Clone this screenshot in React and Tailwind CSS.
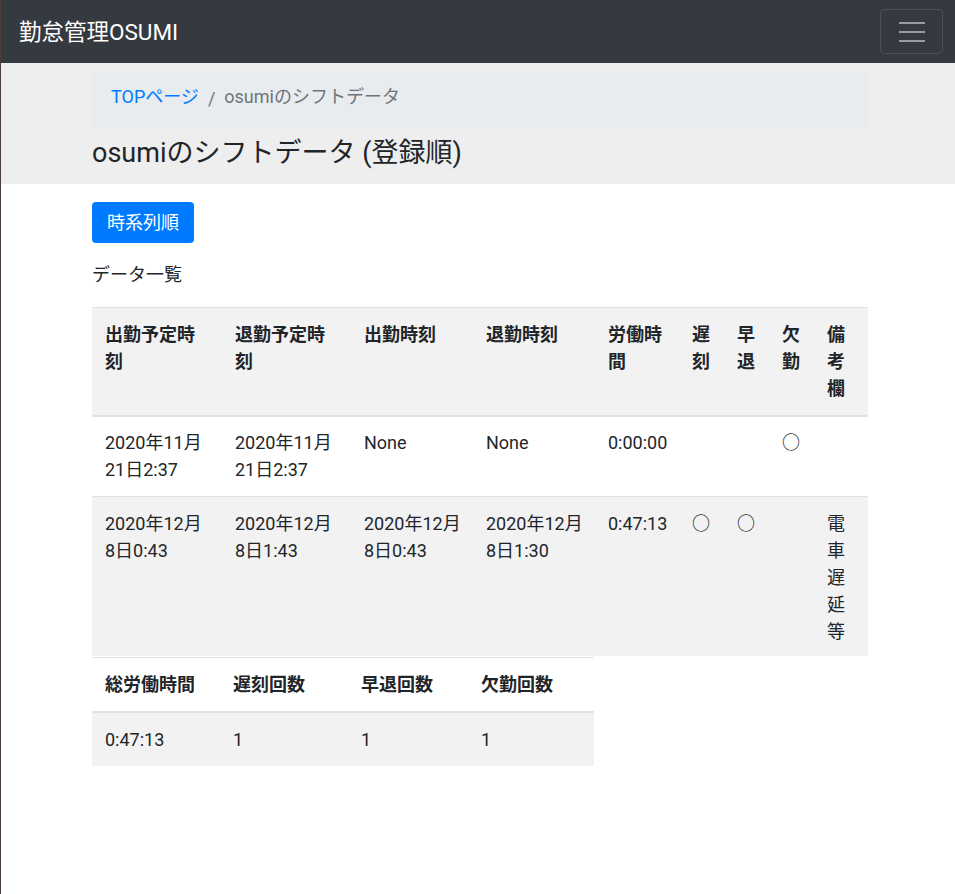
import React from "react";

const F = { fontFamily: 'Roboto, "Noto Sans CJK JP", sans-serif' };

function Lines({ items }) {
  return items.map((t, i) => (
    <span key={i} className="block whitespace-nowrap">{t}</span>
  ));
}

export default function App() {
  const th = "align-top text-left font-bold px-[13px] py-[13px] border-t border-b-2 border-[#dee2e6]";
  const td1 = "align-top px-[13px] pt-[12px] pb-[13px] border-t border-[#dee2e6]";
  const td2 = "align-top px-[13px] pt-[13px] pb-[11px] border-t border-[#dee2e6]";
  const td = "align-top px-[13px] py-[13px] border-t border-[#dee2e6]";
  return (
    <div className="min-h-[894px] bg-white border-l border-[#4d403b] text-[#212529] text-[18px] leading-[27px]" style={F}>
      <nav className="h-[63px] bg-[#343a40] flex items-center justify-between pl-[18px] pr-[12px]">
        <span className="text-white text-[22.5px] leading-[32px]">勤怠管理OSUMI</span>
        <button className="w-[63px] h-[45px] rounded-[5px] border border-[rgba(255,255,255,0.12)] flex flex-col items-center justify-center gap-[7px]">
          <span className="block w-[26px] h-[2px] bg-[rgba(255,255,255,0.5)]"></span>
          <span className="block w-[26px] h-[2px] bg-[rgba(255,255,255,0.5)]"></span>
          <span className="block w-[26px] h-[2px] bg-[rgba(255,255,255,0.5)]"></span>
        </button>
      </nav>

      <div className="bg-[#eeeeee] pt-[9px] pb-[15px]">
        <div className="ml-[91px] w-[776px]">
          <div className="h-[56px] bg-[#e9ecef] rounded-[4px] flex items-start pt-[11px] px-[19px]">
            <span className="text-[#007bff]">TOPページ</span>
            <span className="text-[#6c757d] px-[9px] pt-[2px]">/</span>
            <span className="text-[#6c757d]">osumiのシフトデータ</span>
          </div>
          <h4 className="mt-[9px] text-[27px] leading-[32px] font-normal">osumiのシフトデータ (登録順)</h4>
        </div>
      </div>

      <div className="ml-[91px] w-[776px]">
        <button className="mt-[18px] h-[41px] px-[15px] bg-[#007bff] text-white rounded-[4px] text-[18px] leading-[27px]">時系列順</button>
        <p className="mt-[18px] mb-[19px]">データ一覧</p>

        <table className="table-fixed border-collapse w-[776px]">
          <colgroup>
            <col className="w-[130px]" />
            <col className="w-[129px]" />
            <col className="w-[122px]" />
            <col className="w-[122px]" />
            <col className="w-[84px]" />
            <col className="w-[45px]" />
            <col className="w-[45px]" />
            <col className="w-[45px]" />
            <col className="w-[54px]" />
          </colgroup>
          <thead>
            <tr className="bg-[#f2f2f2]">
              <th className={th}>出勤予定時刻</th>
              <th className={th}>退勤予定時刻</th>
              <th className={th}>出勤時刻</th>
              <th className={th}>退勤時刻</th>
              <th className={th}>労働時間</th>
              <th className={th}>遅刻</th>
              <th className={th}>早退</th>
              <th className={th}>欠勤</th>
              <th className={th}>備考欄</th>
            </tr>
          </thead>
          <tbody>
            <tr className="bg-white">
              <td className={td1}><Lines items={["2020年11月", "21日2:37"]} /></td>
              <td className={td1}><Lines items={["2020年11月", "21日2:37"]} /></td>
              <td className={td1}>None</td>
              <td className={td1}>None</td>
              <td className={td1 + " whitespace-nowrap"}>0:00:00</td>
              <td className={td1}></td>
              <td className={td1}></td>
              <td className={td1}>○</td>
              <td className={td1}></td>
            </tr>
            <tr className="bg-[#f2f2f2]">
              <td className={td2}><Lines items={["2020年12月", "8日0:43"]} /></td>
              <td className={td2}><Lines items={["2020年12月", "8日1:43"]} /></td>
              <td className={td2}><Lines items={["2020年12月", "8日0:43"]} /></td>
              <td className={td2}><Lines items={["2020年12月", "8日1:30"]} /></td>
              <td className={td2 + " whitespace-nowrap"}>0:47:13</td>
              <td className={td2}>○</td>
              <td className={td2}>○</td>
              <td className={td2}></td>
              <td className={td2}>電車遅延等</td>
            </tr>
          </tbody>
        </table>

        <table className="table-fixed border-collapse w-[502px] mt-[1px]">
          <colgroup>
            <col className="w-[128px]" />
            <col className="w-[128px]" />
            <col className="w-[120px]" />
            <col className="w-[126px]" />
          </colgroup>
          <thead>
            <tr className="bg-white">
              <th className={th}>総労働時間</th>
              <th className={th}>遅刻回数</th>
              <th className={th}>早退回数</th>
              <th className={th}>欠勤回数</th>
            </tr>
          </thead>
          <tbody>
            <tr className="bg-[#f2f2f2]">
              <td className={td}>0:47:13</td>
              <td className={td}>1</td>
              <td className={td}>1</td>
              <td className={td}>1</td>
            </tr>
          </tbody>
        </table>
      </div>
    </div>
  );
}
